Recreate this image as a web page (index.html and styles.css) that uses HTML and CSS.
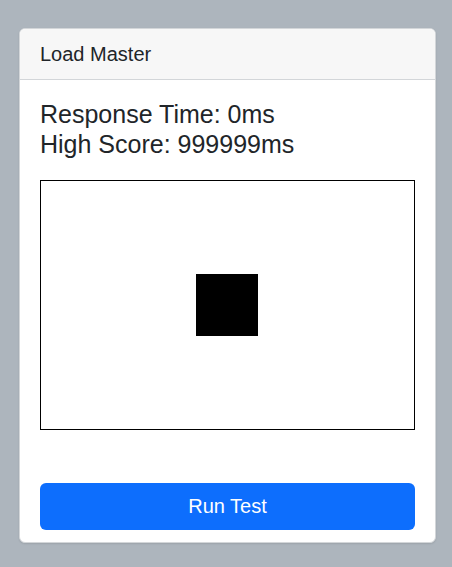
FILE: index.html
```html
<!DOCTYPE html>
<html>
<head>
<meta charset="utf-8">
<link rel="stylesheet" href="styles.css">
</head>
<body>
<div class="card">
  <div class="card-header">Load Master</div>
  <div class="card-body">
    <div class="stats">
      <div>Response Time: 0ms</div>
      <div>High Score: 999999ms</div>
    </div>
    <div class="stage">
      <div class="target"></div>
    </div>
    <button class="btn">Run Test</button>
  </div>
</div>
</body>
</html>
```
FILE: styles.css
```css
html, body {
  margin: 0;
  padding: 0;
}
body {
  background: #adb5bd;
  font-family: "Liberation Sans", Arial, sans-serif;
  color: #212529;
  padding: 28px 0 0 19px;
  height: 567px;
  box-sizing: border-box;
}
.card {
  width: 417px;
  box-sizing: border-box;
  background: #fff;
  border: 1px solid #d3d6d9;
  border-radius: 6px;
  overflow: hidden;
  box-shadow: 0 1px 2px rgba(0,0,0,0.1);
}
.card-header {
  background: #f7f7f7;
  border-bottom: 1px solid #d3d6d9;
  padding: 10px 20px;
  font-size: 20px;
  line-height: 30px;
}
.card-body {
  padding: 19px 20px 12px;
  display: flex;
  flex-direction: column;
}
.stats {
  font-size: 25px;
  line-height: 30px;
}
.stage {
  margin-top: 21px;
  height: 250px;
  border: 1px solid #000;
  box-sizing: border-box;
  display: flex;
  align-items: center;
  justify-content: center;
  padding-right: 1px;
}
.target {
  width: 62px;
  height: 62px;
  background: #000;
}
.btn {
  margin-top: 53px;
  height: 47px;
  border: none;
  border-radius: 6px;
  background: #0d6efd;
  color: #fff;
  font-family: "Liberation Sans", Arial, sans-serif;
  font-size: 20px;
  padding: 0;
}
```
